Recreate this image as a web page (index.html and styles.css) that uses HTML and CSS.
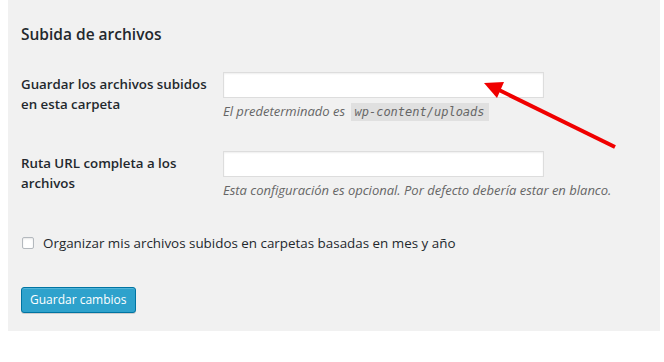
FILE: index.html
```html
<!DOCTYPE html>
<html lang="es">
<head>
  <meta charset="UTF-8" />
  <meta name="viewport" content="width=device-width, initial-scale=1.0"/>
  <title>Ajustes de medios</title>
  <link rel="stylesheet" href="styles.css">
</head>
<body>
  <div class="wrap">
    <h2 class="title">Subida de archivos</h2>

    <div class="form-table">
      <div class="row">
        <label class="field-label" for="upload_path">Guardar los archivos subidos en esta carpeta</label>
        <div class="field">
          <input type="text" id="upload_path" class="regular-text">
          <p class="description">El predeterminado es <code>wp-content/uploads</code></p>
        </div>
      </div>

      <div class="row">
        <label class="field-label" for="upload_url_path">Ruta URL completa a los archivos</label>
        <div class="field">
          <input type="text" id="upload_url_path" class="regular-text">
          <p class="description">Esta configuración es opcional. Por defecto debería estar en blanco.</p>
        </div>
      </div>
    </div>

    <label class="check" for="uploads_use_yearmonth_folders">
      <input type="checkbox" id="uploads_use_yearmonth_folders">
      Organizar mis archivos subidos en carpetas basadas en mes y año
    </label>

    <p class="submit">
      <button class="button-primary">Guardar cambios</button>
    </p>

    <svg class="arrow" width="652" height="331" viewBox="0 0 652 331">
      <line x1="607" y1="147" x2="489" y2="89" stroke="#f00000" stroke-width="4" />
      <polygon points="476,83 496,82 489,98" fill="#f00000" />
    </svg>
  </div>
</body>
</html>
```

FILE: styles.css
```css
html, body {
  margin: 0;
  padding: 0;
  background-color: #ffffff;
  font-family: "Open Sans", "Noto Sans", sans-serif;
  color: #23282d;
}

.wrap {
  position: relative;
  width: 652px;
  height: 331px;
  margin-left: 8px;
  padding: 24px 0 0 13px;
  box-sizing: border-box;
  background-color: #f1f1f1;
}

.title {
  margin: 0;
  font-size: 15.5px;
  font-weight: 600;
  line-height: 20px;
}

.form-table {
  margin-top: 13px;
}

.row {
  display: grid;
  grid-template-columns: 202px 1fr;
  padding: 15px 0;
}

.field-label {
  padding-top: 2px;
  padding-right: 10px;
  font-size: 13.3px;
  font-weight: 600;
  line-height: 20px;
}

.regular-text {
  display: block;
  width: 321px;
  height: 26px;
  margin: 0;
  padding: 3px 5px;
  box-sizing: border-box;
  border: 1px solid #ddd;
  background-color: #fff;
  box-shadow: inset 0 1px 2px rgba(0, 0, 0, 0.07);
  font-family: inherit;
  font-size: 14px;
}

.description {
  margin: 4px 0 0;
  font-size: 13px;
  font-style: italic;
  line-height: 18px;
  color: #666;
}

.description code {
  padding: 2px 4px;
  margin-left: 2px;
  background-color: rgba(0, 0, 0, 0.07);
  font-family: "DejaVu Sans Mono", monospace;
  font-size: 12px;
}

.check {
  display: flex;
  align-items: center;
  gap: 9px;
  margin-top: 19px;
  padding-left: 1px;
  font-size: 13.4px;
  line-height: 20px;
}

.check input {
  appearance: none;
  width: 12px;
  height: 12px;
  margin: 0;
  border: 1px solid #b4b9be;
  border-radius: 2px;
  background-color: #fff;
  box-shadow: inset 0 1px 2px rgba(0, 0, 0, 0.1);
}

.submit {
  margin: 34px 0 0;
}

.button-primary {
  height: 26px;
  padding: 0 8px;
  border: 1px solid #0074a2;
  border-radius: 3px;
  background-color: #2ea2cc;
  box-shadow: inset 0 1px 0 rgba(120, 200, 230, 0.5), 0 1px 0 rgba(0, 0, 0, 0.15);
  color: #fff;
  font-family: inherit;
  font-size: 12px;
  line-height: 24px;
}

.arrow {
  position: absolute;
  top: 0;
  left: 0;
}
```
